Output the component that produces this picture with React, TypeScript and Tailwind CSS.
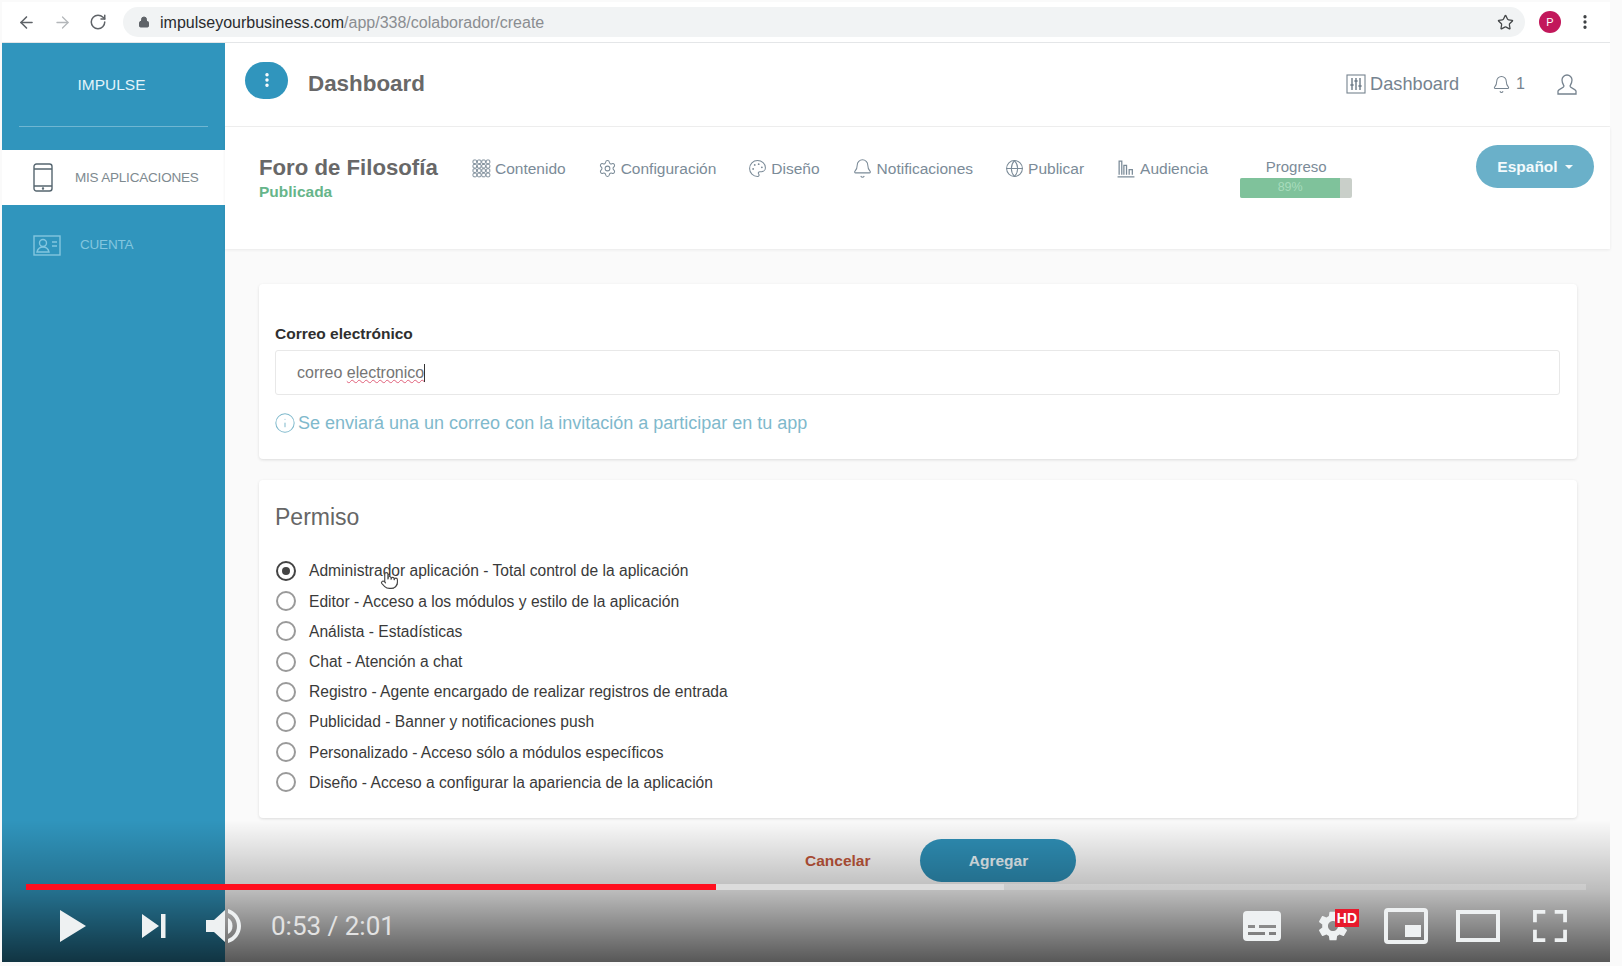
import {
  ArrowLeft,
  ArrowRight,
  Bell,
  EllipsisVertical,
  Globe,
  Info,
  Lock,
  Palette,
  Pointer,
  RotateCw,
  Settings,
  Star,
} from "lucide-react";

const permisos = [
  "Administrador aplicación - Total control de la aplicación",
  "Editor - Acceso a los módulos y estilo de la aplicación",
  "Análista - Estadísticas",
  "Chat - Atención a chat",
  "Registro - Agente encargado de realizar registros de entrada",
  "Publicidad - Banner y notificaciones push",
  "Personalizado - Acceso sólo a módulos específicos",
  "Diseño - Acceso a configurar la apariencia de la aplicación",
];

const AudienceIcon = () => (
  <svg width="20" height="19" viewBox="0 0 18 18" fill="none" stroke="currentColor" strokeWidth="1.2">
    <path d="M1 17h16M2.500 15V2h2.500v13M7 15V6h2.500v9M12 15v-5h3v5" />
  </svg>
);

const GridIcon = () => (
  <svg width="19" height="19" viewBox="0 0 19 19" fill="none" stroke="currentColor" strokeWidth="1">
    {[0, 1, 2, 3].map((row) =>
      [0, 1, 2, 3].map((col) => (
        <rect key={`${row}-${col}`} x={1 + col * 4.4} y={1 + row * 4.4} width="3.6" height="3.6" rx="1" />
      )),
    )}
  </svg>
);

const navItems = [
  { label: "Contenido", icon: <GridIcon /> },
  { label: "Configuración", icon: <Settings size={19} strokeWidth={1.3} /> },
  { label: "Diseño", icon: <Palette size={19} strokeWidth={1.3} /> },
  { label: "Notificaciones", icon: <Bell size={21} strokeWidth={1.2} /> },
  { label: "Publicar", icon: <Globe size={19} strokeWidth={1.3} /> },
  { label: "Audiencia", icon: <AudienceIcon /> },
];

const BrowserBar = () => (
  <div className="flex h-[41px] shrink-0 items-center border-b border-[#e4e6e8] bg-white text-[#5f6368]">
    <ArrowLeft size={19} className="ml-[15px]" strokeWidth={2} />
    <ArrowRight size={19} className="ml-[17px] text-[#b4b7ba]" strokeWidth={1.6} />
    <RotateCw size={18} className="ml-[17px]" strokeWidth={2} />
    <div className="ml-[16px] flex h-[30px] w-[1402px] items-center rounded-full bg-[#f1f3f4] pl-[15px] pr-[11px]">
      <Lock size={12} fill="currentColor" strokeWidth={2} />
      <span className="ml-[10px] pt-px text-[16px] text-[#8a8d91]">
        <span className="text-[#2a2c2e]">impulseyourbusiness.com</span>/app/338/colaborador/create
      </span>
      <Star size={17} className="ml-auto text-[#444749]" strokeWidth={1.8} />
    </div>
    <div className="ml-[14px] flex h-[22px] w-[22px] items-center justify-center rounded-full bg-[#c2185b] text-[11px] text-white">
      P
    </div>
    <EllipsisVertical size={18} className="ml-[15px] text-[#3c3f42]" strokeWidth={2.4} />
  </div>
);

const Sidebar = () => (
  <aside className="flex w-[223px] shrink-0 flex-col bg-[#3095bd]">
    <div className="mx-[17px] flex h-[84px] shrink-0 items-center justify-center border-b border-[#6fb6d2] pr-[4px] text-[15.5px] text-[#e3f3f9]">
      IMPULSE
    </div>
    <div className="mt-[23px] flex h-[55px] shrink-0 items-center bg-white pl-[31px] text-[#7e8a90]">
      <svg width="20" height="29" viewBox="0 0 20 29" fill="none" stroke="#55656f" strokeWidth="1.4">
        <rect x="1" y="1" width="18" height="27" rx="2.500" />
        <path d="M1 6h18M1 23h18" />
        <circle cx="10" cy="25.500" r="0.500" />
      </svg>
      <span className="ml-[22px] pt-px text-[13.5px] tracking-[-0.2px]">MIS APLICACIONES</span>
    </div>
    <div className="mt-[30px] flex items-center pl-[31px] text-[#83c6df]">
      <svg width="28" height="21" viewBox="0 0 28 21" fill="none" stroke="currentColor" strokeWidth="1.4">
        <rect x="1" y="1" width="26" height="19" />
        <circle cx="10" cy="8" r="3.500" />
        <path d="M4 17c1-4 3-5 6-5s5 1 6 5zM19 7h5M19 11h5" />
      </svg>
      <span className="ml-[19px] text-[13.5px] tracking-[-0.2px]">CUENTA</span>
    </div>
  </aside>
);

const TopHeader = () => (
  <header className="flex h-[84px] shrink-0 items-center border-b border-[#f0f0f0] bg-white pl-[20px] pr-[32px]">
    <div className="-mt-[9px] flex h-[37px] w-[43px] items-center justify-center rounded-full bg-[#3095bd] text-white">
      <EllipsisVertical size={18} strokeWidth={2.6} />
    </div>
    <h1 className="-mt-[2px] ml-[20px] text-[22.400px] font-bold text-[#686868]">Dashboard</h1>
    <div className="ml-auto flex items-center text-[#76838f]">
      <svg width="20" height="20" viewBox="0 0 20 20" fill="none" stroke="currentColor" strokeWidth="1.1">
        <rect x="1" y="1" width="18" height="18" />
        <path d="M6 4v12M10 4v12M14 4v12" strokeWidth="1.500" />
        <path d="M4.500 11h3M8.500 7h3M12.500 12h3" strokeWidth="1.800" />
      </svg>
      <span className="ml-[4px] text-[18.200px]">Dashboard</span>
      <Bell size={19} strokeWidth={1.3} className="ml-[33px]" />
      <span className="ml-[5px] text-[16px]">1</span>
      <svg width="22" height="23" viewBox="0 0 22 23" fill="none" stroke="currentColor" strokeWidth="1.3" className="ml-[31px]">
        <path d="M11 2a5 5 0 0 1 5 5c0 3-1.500 5-2 6 0 2 5 2.500 6 5v3H2v-3c1-2.500 6-3 6-5-.5-1-2-3-2-6a5 5 0 0 1 5-5z" />
      </svg>
    </div>
  </header>
);

const SubNav = () => (
  <div className="flex h-[122px] shrink-0 items-start bg-white pl-[34px] pr-[16px] shadow-[0_1px_3px_rgba(0,0,0,0.07)]">
    <div className="mt-[28px] w-[213px] shrink-0">
      <h2 className="text-[22.200px] leading-[26px] font-bold text-[#686868]">Foro de Filosofía</h2>
      <p className="mt-px text-[15.500px] leading-[19px] font-bold text-[#66b58a]">Publicada</p>
    </div>
    <nav className="mt-[30px] flex items-center gap-[32px] text-[#7b8b98]">
      {navItems.map((item) => (
        <div key={item.label} className="flex items-center gap-[4px] text-[15.500px] text-[#7b8b98]">
          {item.icon}
          <span>{item.label}</span>
        </div>
      ))}
      <div className="h-[22px] w-[112px] shrink-0">
        <p className="text-center text-[15px] leading-[18px] text-[#7b8b98]">Progreso</p>
        <div className="mt-[2px] flex h-[20px] overflow-hidden rounded-[2px] bg-[#c9cfc9]">
          <div className="flex w-[100px] items-center justify-center bg-[#7fc29b] text-[12.500px] text-[#a7dcbc]">89%</div>
        </div>
      </div>
    </nav>
    <button className="ml-auto mt-[18px] flex h-[43px] w-[118px] items-center justify-center gap-[7px] rounded-full bg-[#6ab0c9] text-[15.500px] font-bold text-[#f3fafc]">
      Español
      <span className="h-0 w-0 border-x-[4px] border-t-[4px] border-x-transparent border-t-[#f3fafc]" />
    </button>
  </div>
);

const EmailCard = () => (
  <section className="flex h-[175px] flex-col rounded-[4px] bg-white pl-[16px] pr-[17px] pt-[41px] shadow-[0_1px_3px_rgba(0,0,0,0.12)]">
    <label className="text-[15.500px] leading-[18px] font-bold text-[#2f2f2f]">Correo electrónico</label>
    <div className="mt-[7px] flex h-[45px] items-center rounded-[3px] border border-[#e8e8e8] pl-[21px] text-[16px] text-[#757575]">
      correo&nbsp;
      <span className="underline decoration-[#e0607a] decoration-wavy decoration-1">electronico</span>
      <span className="h-[18px] w-px bg-[#333]" />
    </div>
    <div className="mt-[17px] flex items-center gap-[2px] text-[18px] leading-[22px] text-[#7fb9cc]">
      <Info size={22} strokeWidth={1.1} className="-ml-px" />
      <span>Se enviará una un correo con la invitación a participar en tu app</span>
    </div>
  </section>
);

const PermisoCard = () => (
  <section className="relative mt-[21px] h-[338px] rounded-[4px] bg-white px-[17px] pt-[23px] shadow-[0_1px_3px_rgba(0,0,0,0.12)]">
    <h3 className="-ml-px text-[23px] leading-[28px] text-[#666]">Permiso</h3>
    <ul className="mt-[25px] flex flex-col">
      {permisos.map((label, i) => (
        <li key={label} className="flex h-[30.200px] items-center gap-[13px] text-[15.600px] text-[#3a3a3a]">
          {i === 0 ? (
            <span className="flex h-[20px] w-[20px] items-center justify-center rounded-full border-2 border-[#444]">
              <span className="h-[8px] w-[8px] rounded-full bg-[#444]" />
            </span>
          ) : (
            <span className="h-[20px] w-[20px] rounded-full border-2 border-[#9a9a9a]" />
          )}
          {label}
        </li>
      ))}
    </ul>
    <Pointer size={19} strokeWidth={1.4} fill="white" className="absolute left-[121px] top-[91px] text-[#444]" />
  </section>
);

const VideoControls = () => (
  <div className="absolute inset-x-0 bottom-0 h-[142px] bg-gradient-to-b from-transparent via-black/25 to-black/65">
    <div className="absolute left-[24px] right-[24px] top-[64px] flex h-[6px] bg-white/20">
      <div className="relative h-full w-[978px] bg-[#dcdcdc]">
        <div className="absolute inset-y-0 left-0 w-[690px] bg-[#ff0f1f]" />
      </div>
    </div>
    <div className="absolute inset-x-0 bottom-[17px] flex h-[38px] items-center text-[#eef1f2]">
      <svg width="28" height="34" viewBox="0 0 28 34" className="ml-[57px]" fill="currentColor">
        <path d="M1 1l26 16L1 33z" />
      </svg>
      <svg width="26" height="26" viewBox="0 0 26 26" className="ml-[54px]" fill="currentColor">
        <path d="M1 1l17 12L1 25zM20 1h4.500v24H20z" />
      </svg>
      <svg width="38" height="38" viewBox="0 0 38 38" className="ml-[38px]" fill="currentColor">
        <path d="M1 13h8L20 3v32L9 25H1z" />
        <path d="M23 11c3 1.500 4.500 4.500 4.500 8s-1.500 6.500-4.500 8z" />
        <path d="M23 2c7.500 2 13 9 13 17s-5.500 15-13 17v-4c5.500-2 9-7 9-13s-3.500-11-9-13z" />
      </svg>
      <span className="ml-[28px] font-['Roboto',sans-serif] text-[26px] text-[#e2e2e2]">0:53 / 2:01</span>
      <div className="ml-auto flex items-center">
        <svg width="38" height="30" viewBox="0 0 38 30" fill="currentColor">
          <path fillRule="evenodd" d="M4 0h30a4 4 0 0 1 4 4v22a4 4 0 0 1-4 4H4a4 4 0 0 1-4-4V4a4 4 0 0 1 4-4zM5 14v3h7v-3zM16 14v3h17v-3zM5 21v3h17v-3zM26 21v3h7v-3z" />
        </svg>
        <div className="relative ml-[34px] h-[36px] w-[36px]">
          <svg width="36" height="36" viewBox="8 8 20 20" fill="currentColor">
            <path
              fillRule="evenodd"
              d="m 23.94,18.78 c .03,-0.25 .05,-0.51 .05,-0.78 0,-0.27 -0.02,-0.52 -0.05,-0.78 l 1.68,-1.32 c .15,-0.12 .19,-0.33 .09,-0.51 l -1.6,-2.76 c -0.09,-0.17 -0.31,-0.24 -0.48,-0.17 l -1.99,.8 c -0.41,-0.32 -0.86,-0.58 -1.35,-0.78 l -0.30,-2.12 c -0.02,-0.19 -0.19,-0.33 -0.39,-0.33 l -3.2,0 c -0.2,0 -0.36,.14 -0.39,.33 l -0.30,2.12 c -0.48,.2 -0.93,.47 -1.35,.78 l -1.99,-0.8 c -0.18,-0.07 -0.39,0 -0.48,.17 l -1.6,2.76 c -0.10,.17 -0.05,.39 .09,.51 l 1.68,1.32 c -0.03,.25 -0.05,.52 -0.05,.78 0,.26 .02,.52 .05,.78 l -1.68,1.32 c -0.15,.12 -0.19,.33 -0.09,.51 l 1.6,2.76 c .09,.17 .31,.24 .48,.17 l 1.99,-0.8 c .41,.32 .86,.58 1.35,.78 l .30,2.12 c .02,.19 .19,.33 .39,.33 l 3.2,0 c .2,0 .36,-0.14 .39,-0.33 l .30,-2.12 c .48,-0.2 .93,-0.47 1.35,-0.78 l 1.99,.8 c .18,.07 .39,0 .48,-0.17 l 1.6,-2.76 c .09,-0.17 .05,-0.39 -0.09,-0.51 l -1.68,-1.32 0,0 z m -5.94,2.01 c -1.54,0 -2.8,-1.25 -2.8,-2.8 0,-1.54 1.25,-2.8 2.8,-2.8 1.54,0 2.8,1.25 2.8,2.8 0,1.54 -1.25,2.8 -2.8,2.8 l 0,0 z"
            />
          </svg>
          <span className="absolute -right-[8px] top-[1px] bg-[#e8192c] px-[2px] text-[14px] leading-[18px] font-bold text-white">HD</span>
        </div>
        <svg width="44" height="36" viewBox="0 0 44 36" className="ml-[33px]" fill="none">
          <rect x="2" y="2" width="40" height="32" rx="2" stroke="currentColor" strokeWidth="4" />
          <rect x="21" y="17" width="16" height="12" fill="currentColor" />
        </svg>
        <svg width="44" height="32" viewBox="0 0 44 32" className="ml-[28px]" fill="none">
          <rect x="2" y="2" width="40" height="28" stroke="currentColor" strokeWidth="4" />
        </svg>
        <svg width="34" height="32" viewBox="0 0 36 34" className="ml-[33px] mr-[43px]" fill="currentColor">
          <path d="M0 0h13v4H4v9H0zM23 0h13v13h-4V4h-9zM0 21h4v9h9v4H0zM32 21h4v13H23v-4h9z" />
        </svg>
      </div>
    </div>
  </div>
);

export default function App() {
  return (
    <div className="h-[966px] w-[1622px] overflow-hidden bg-[#fafafa] pb-[4px] pl-[2px] pr-[12px] pt-[2px] font-['Liberation_Sans',sans-serif]">
      <div className="relative flex h-full flex-col bg-[#fafafa]">
        <BrowserBar />
        <div className="flex min-h-0 flex-1">
          <Sidebar />
          <main className="flex min-w-0 flex-1 flex-col">
            <TopHeader />
            <SubNav />
            <div className="flex-1 pl-[34px] pr-[33px] pt-[35px]">
              <EmailCard />
              <PermisoCard />
              <div className="mt-[21px] flex items-center">
                <button className="ml-[546px] text-[15.500px] font-bold text-[#c0563a]">Cancelar</button>
                <button className="ml-[50px] h-[43px] w-[156px] rounded-full bg-[#2e8fb6] text-[15.500px] font-bold text-[#eaf5f9]">Agregar</button>
              </div>
            </div>
          </main>
        </div>
        <VideoControls />
      </div>
    </div>
  );
}
